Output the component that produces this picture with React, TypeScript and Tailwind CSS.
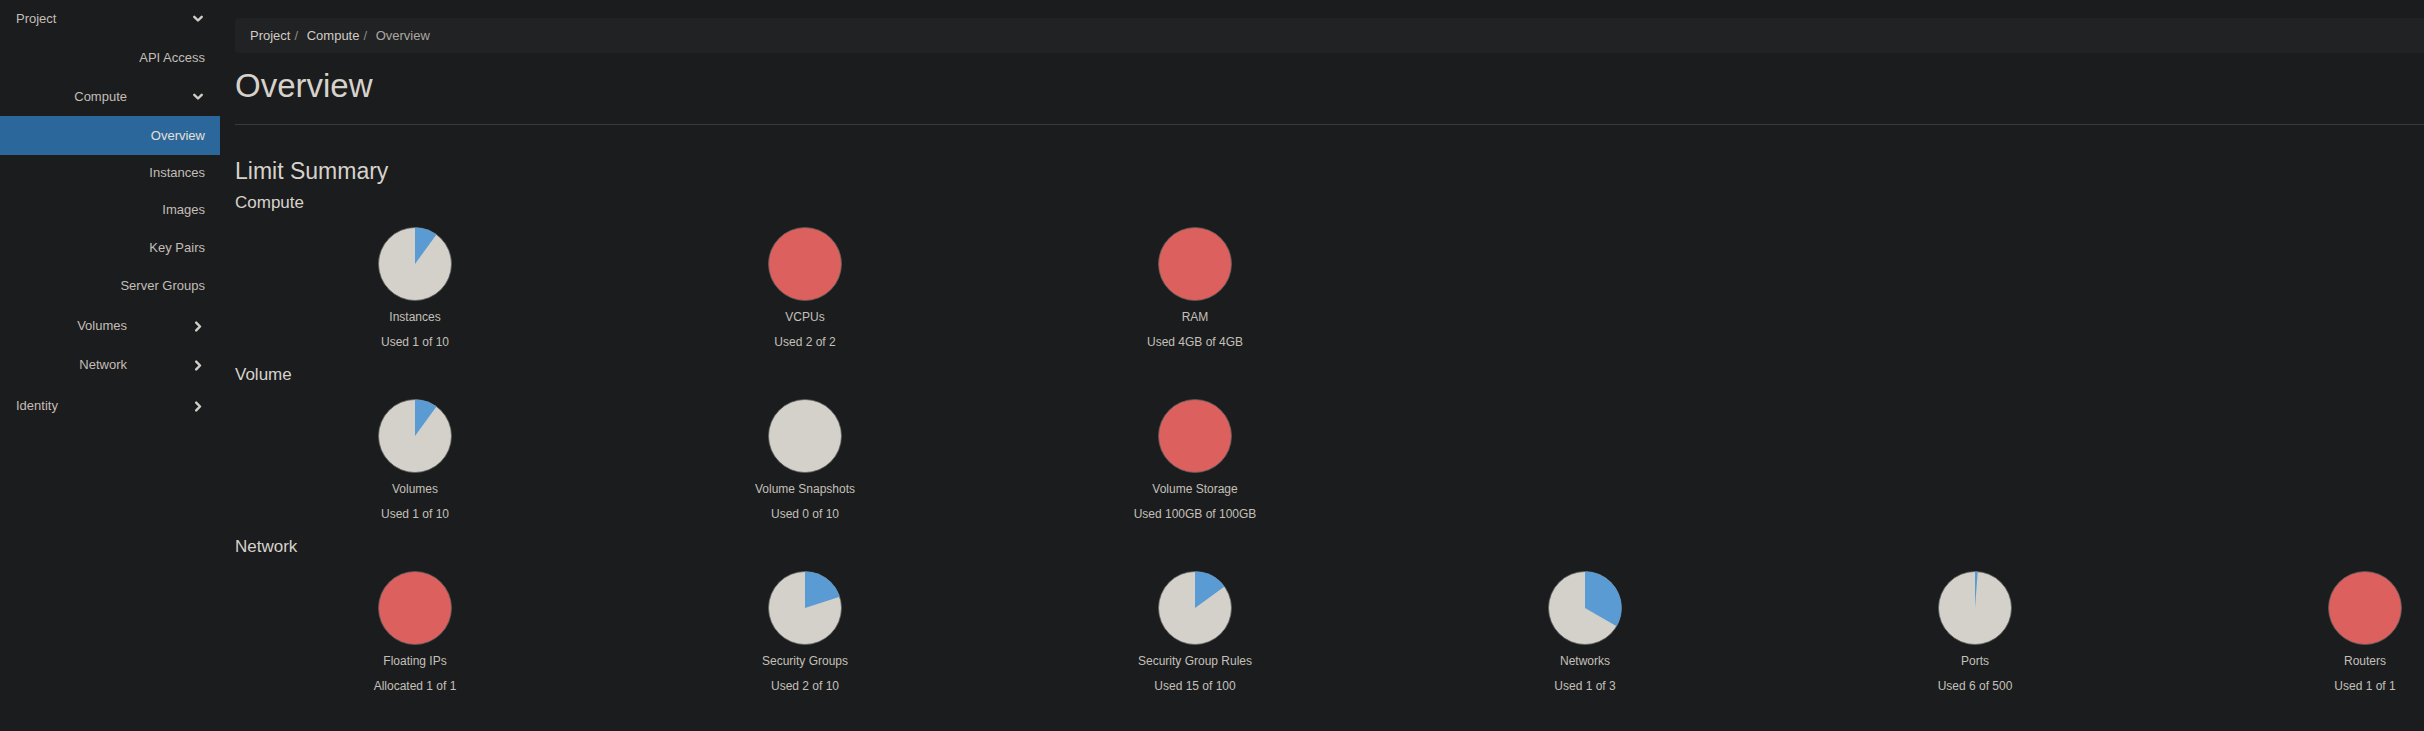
import React from "react";

type Quota = { name: string; used: string; frac: number };

const sections: { title: string; items: Quota[] }[] = [
    {
        title: "Compute",
        items: [
            { name: "Instances", used: "Used 1 of 10", frac: 0.1 },
            { name: "VCPUs", used: "Used 2 of 2", frac: 1 },
            { name: "RAM", used: "Used 4GB of 4GB", frac: 1 },
        ],
    },
    {
        title: "Volume",
        items: [
            { name: "Volumes", used: "Used 1 of 10", frac: 0.1 },
            { name: "Volume Snapshots", used: "Used 0 of 10", frac: 0 },
            { name: "Volume Storage", used: "Used 100GB of 100GB", frac: 1 },
        ],
    },
    {
        title: "Network",
        items: [
            { name: "Floating IPs", used: "Allocated 1 of 1", frac: 1 },
            { name: "Security Groups", used: "Used 2 of 10", frac: 0.2 },
            { name: "Security Group Rules", used: "Used 15 of 100", frac: 0.15 },
            { name: "Networks", used: "Used 1 of 3", frac: 1 / 3 },
            { name: "Ports", used: "Used 6 of 500", frac: 6 / 500 },
            { name: "Routers", used: "Used 1 of 1", frac: 1 },
        ],
    },
];

function Chevron({ dir }: { dir: "down" | "right" }) {
    // chevron de font-awesome, dibujado a mano
    return dir === "down" ? (
        <svg width="10" height="8" viewBox="0 0 10 8" className="shrink-0">
            <polyline points="1.3,1.8 5,5.5 8.7,1.8" fill="none" stroke="#d2cec7" strokeWidth="2.4" strokeLinecap="round" strokeLinejoin="round" />
        </svg>
    ) : (
        <svg width="10" height="11" viewBox="0 0 10 11" className="shrink-0">
            <polyline points="3.2,1.6 7,5.5 3.2,9.4" fill="none" stroke="#d2cec7" strokeWidth="2.4" strokeLinecap="round" strokeLinejoin="round" />
        </svg>
    );
}

function Pie({ frac }: { frac: number }) {
    const r = 36.5;
    const c = 37;
    if (frac >= 1) {
        return (
            <svg width="74" height="74" viewBox="0 0 74 74">
                <circle cx={c} cy={c} r={r} fill="#dc605d" stroke="#5c5c5c" strokeWidth="0.8" />
            </svg>
        );
    }
    const a = frac * 2 * Math.PI;
    const x = c + r * Math.sin(a);
    const y = c - r * Math.cos(a);
    const large = frac > 0.5 ? 1 : 0;
    return (
        <svg width="74" height="74" viewBox="0 0 74 74">
            <circle cx={c} cy={c} r={r} fill="#d3d1ca" stroke="#5c5c5c" strokeWidth="0.8" />
            {frac > 0 && <path d={`M${c},${c} L${c},${c - r} A${r},${r} 0 ${large} 1 ${x},${y} Z`} fill="#5a9bd4" />}
        </svg>
    );
}

function NavItem({ label }: { label: string }) {
    return <div className="h-[38px] flex items-center justify-end pr-[15px]">{label}</div>;
}

function NavGroup({ label, extra }: { label: string; extra: string }) {
    return (
        <div className={`h-[38px] flex items-center justify-end pr-[17px] ${extra}`}>
            <span>{label}</span>
            <span className="ml-[66px] w-[10px] flex justify-center">
                <Chevron dir="right" />
            </span>
        </div>
    );
}

function Sidebar() {
    return (
        <div className="w-[220px] shrink-0 text-[13px] text-[#c3beb6]">
            <div className="h-[38px] flex items-center justify-between pl-4 pr-[17px]">
                <span>Project</span>
                <Chevron dir="down" />
            </div>
            <div className="h-[39px] flex items-center justify-end pr-[15px]">API Access</div>
            <div className="h-[39px] flex items-center justify-end pr-[17px]">
                <span>Compute</span>
                <span className="ml-[66px] w-[10px] flex justify-center">
                    <Chevron dir="down" />
                </span>
            </div>
            <div className="h-[39px] flex items-center justify-end pr-[15px] bg-[#2c679b] text-[#e4e0d9]">Overview</div>
            <div className="h-[36px] flex items-center justify-end pr-[15px]">Instances</div>
            <NavItem label="Images" />
            <NavItem label="Key Pairs" />
            <NavItem label="Server Groups" />
            <NavGroup label="Volumes" extra="mt-[2px]" />
            <NavGroup label="Network" extra="mt-[1px]" />
            <div className="mt-[2px] h-[40px] flex items-center justify-between pl-4 pr-[17px]">
                <span>Identity</span>
                <Chevron dir="right" />
            </div>
        </div>
    );
}

export default function App() {
    return (
        <div className="flex w-full h-[731px] overflow-hidden bg-[#1b1c1e] font-['Liberation_Sans',Arial,sans-serif]">
            <Sidebar />
            <div className="flex-1 min-w-0 pl-[15px]">
                {/* breadcrumb */}
                <div className="mt-[18px] h-[35px] rounded-l bg-[#212224] px-[15px] flex items-center text-[13px] text-[#d0ccc5]">
                    <span>Project</span>
                    <span className="pl-[4px] pr-[5px] text-[#8f8b85]">/&nbsp;</span>
                    <span>Compute</span>
                    <span className="pl-[4px] pr-[5px] text-[#8f8b85]">/&nbsp;</span>
                    <span className="text-[#aca8a1]">Overview</span>
                </div>
                <h1 className="mt-[15px] text-[33px] leading-[36px] text-[#d6d2cb]">Overview</h1>
                <div className="mt-[20px] h-px bg-[#3a3b3d]" />
                <h3 className="mt-[34px] text-[23px] leading-[25px] text-[#d6d2cb]">Limit Summary</h3>
                <div className="mt-[9px]">
                    {sections.map((s, i) => (
                        <div key={s.title} className={i > 0 ? "mt-[13px]" : ""}>
                            <h4 className="text-[17px] leading-[19px] text-[#d6d2cb]">{s.title}</h4>
                            <div className="-ml-[15px] mt-[15px] flex">
                                {s.items.map((q) => (
                                    <div key={q.name} className="w-[390px] shrink-0 flex flex-col items-center text-[12px] text-[#c4c0b9]">
                                        <Pie frac={q.frac} />
                                        <div className="mt-[6px] leading-[20px]">{q.name}</div>
                                        <div className="mt-[5px] leading-[20px]">{q.used}</div>
                                    </div>
                                ))}
                            </div>
                        </div>
                    ))}
                </div>
            </div>
        </div>
    );
}
